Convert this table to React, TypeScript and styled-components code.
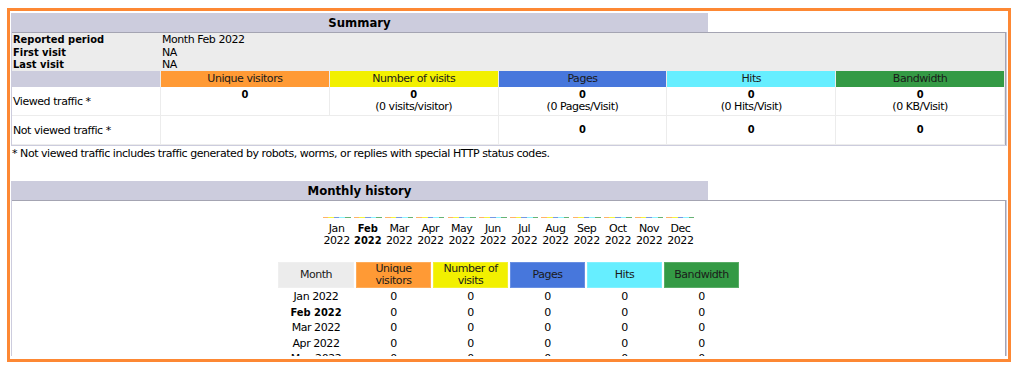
import React from "react";
import styled, { createGlobalStyle } from "styled-components";

const COLORS = {
  u: "#FF9A35",
  v: "#F2F000",
  p: "#4777DC",
  h: "#66EEFF",
  k: "#349A45",
  title: "#CCCCDD",
  gray: "#ECECEC",
  frame: "#FD8834",
  edge: "#A4A4B2",
};

const BOLD_FONT = `"DejaVu Sans Condensed", "DejaVu Sans", Verdana, sans-serif`;

const Global = createGlobalStyle`
  html, body { margin: 0; padding: 0; background: #fff; }
  body { font-family: "DejaVu Sans", Verdana, "Liberation Sans", sans-serif; color: #000; letter-spacing: -0.45px; }
  b { font-family: ${BOLD_FONT}; letter-spacing: 0; }
  #root { width: 1024px; }
`;

const Frame = styled.div`
  margin: 8px 0 0 7px;
  width: 996px;
  border: 3px solid ${COLORS.frame};
  padding: 2px 1px 3px 1px;
  background: #fff;
`;

const Clip = styled.div`
  height: 343px;
  overflow: hidden;
  font-size: 11px;
`;

const TitleRow = styled.div`
  display: flex;
  height: 19px;
`;

const Title = styled.div`
  width: 697px;
  background: ${COLORS.title};
  font-family: ${BOLD_FONT};
  font-weight: bold;
  font-size: 13px;
  letter-spacing: 0;
  display: flex;
  align-items: center;
  justify-content: center;
`;

const Blank = styled.div`
  flex: 1;
  background: #fff;
`;

const Box = styled.div`
  background: ${COLORS.title};
  padding: 0 1px 1px 1px;
`;

const SummaryGrid = styled.div`
  display: grid;
  grid-template-columns: 149px repeat(5, 1fr);
  background: #fff;
  border-top: 1px solid ${COLORS.edge};
  border-right: 1px solid ${COLORS.edge};
`;

const InfoLabel = styled.div<{ $h: number }>`
  grid-column: 1;
  background: ${COLORS.gray};
  font-family: ${BOLD_FONT};
  font-weight: bold;
  letter-spacing: 0;
  height: ${(p) => p.$h}px;
  line-height: ${(p) => p.$h}px;
  padding-left: 1px;
  white-space: nowrap;
`;

const InfoValue = styled.div<{ $h: number }>`
  grid-column: 2 / span 5;
  background: ${COLORS.gray};
  height: ${(p) => p.$h}px;
  line-height: ${(p) => p.$h}px;
  padding-left: 1px;
`;

const HeadBlank = styled.div`
  background: ${COLORS.title};
  height: 16px;
  border-right: 1px solid ${COLORS.gray};
`;

const HeadCell = styled.div<{ $bg: string }>`
  background: ${(p) => p.$bg};
  height: 16px;
  line-height: 16px;
  text-align: center;
  border-right: 1px solid ${COLORS.gray};
  color: #1a1a1a;
  white-space: nowrap;
`;

const RowLabel = styled.div`
  grid-column: 1;
  height: 28px;
  display: flex;
  align-items: center;
  padding-left: 1px;
  border-right: 1px solid ${COLORS.gray};
  border-bottom: 1px solid ${COLORS.gray};
`;

const ValueCell = styled.div<{ $span?: number }>`
  grid-column: span ${(p) => p.$span ?? 1};
  height: 28px;
  display: flex;
  flex-direction: column;
  align-items: center;
  justify-content: center;
  line-height: 12px;
  border-right: 1px solid ${COLORS.gray};
  border-bottom: 1px solid ${COLORS.gray};
`;

const Note = styled.div`
  padding: 1px 0 0 1px;
  line-height: 13px;
  height: 34px;
  white-space: nowrap;
`;

const HistoryBody = styled.div`
  background: #fff;
  border-top: 1px solid ${COLORS.edge};
  border-right: 1px solid ${COLORS.edge};
  height: 200px;
  display: flex;
  flex-direction: column;
  align-items: center;
`;

const Chart = styled.div`
  display: flex;
  padding-top: 16px;
`;

const ChartCol = styled.div`
  width: 31.25px;
  display: flex;
  flex-direction: column;
  align-items: center;
`;

const Bars = styled.div`
  display: flex;
  height: 1px;
`;

const Bar = styled.span<{ $c: string }>`
  width: 5.6px;
  height: 1px;
  background: ${(p) => p.$c};
  opacity: 0.75;
`;

const MonthLabel = styled.div<{ $cur?: boolean }>`
  margin-top: 5px;
  text-align: center;
  line-height: 12px;
  white-space: nowrap;
  ${(p) =>
    p.$cur
      ? `font-family: ${BOLD_FONT}; font-weight: bold; letter-spacing: 0;`
      : ""}
`;

const MonthTable = styled.div`
  margin-top: 15px;
  display: grid;
  grid-template-columns: 76px repeat(5, 75px);
  column-gap: 2px;
  grid-auto-rows: 15.5px;
  grid-template-rows: 27px;
`;

const MHead = styled.div<{ $bg: string }>`
  background: ${(p) => p.$bg};
  height: 26px;
  display: flex;
  align-items: center;
  justify-content: center;
  text-align: center;
  line-height: 12px;
  color: #1a1a1a;
  box-shadow: inset 0 0 0 1px rgba(255, 255, 255, 0.18);
`;

const MCell = styled.div<{ $bold?: boolean }>`
  text-align: center;
  line-height: 15.5px;
  white-space: nowrap;
  ${(p) =>
    p.$bold
      ? `font-family: ${BOLD_FONT}; font-weight: bold; letter-spacing: 0;`
      : ""}
`;

const months = ["Jan", "Feb", "Mar", "Apr", "May", "Jun", "Jul", "Aug", "Sep", "Oct", "Nov", "Dec"];
const barColors = [COLORS.u, COLORS.v, COLORS.p, COLORS.h, COLORS.k];

export default function App() {
  return (
    <>
      <Global />
      <Frame>
        <Clip>
          <TitleRow>
            <Title>Summary</Title>
            <Blank />
          </TitleRow>
          <Box>
            <SummaryGrid>
              <InfoLabel $h={13}>Reported period</InfoLabel>
              <InfoValue $h={13}>Month Feb 2022</InfoValue>
              <InfoLabel $h={13}>First visit</InfoLabel>
              <InfoValue $h={13}>NA</InfoValue>
              <InfoLabel $h={12}>Last visit</InfoLabel>
              <InfoValue $h={12}>NA</InfoValue>

              <HeadBlank />
              <HeadCell $bg={COLORS.u}>Unique visitors</HeadCell>
              <HeadCell $bg={COLORS.v}>Number of visits</HeadCell>
              <HeadCell $bg={COLORS.p}>Pages</HeadCell>
              <HeadCell $bg={COLORS.h}>Hits</HeadCell>
              <HeadCell $bg={COLORS.k}>Bandwidth</HeadCell>

              <RowLabel>Viewed traffic *</RowLabel>
              <ValueCell>
                <b>0</b>
                <span>&nbsp;</span>
              </ValueCell>
              <ValueCell>
                <b>0</b>
                <span>(0 visits/visitor)</span>
              </ValueCell>
              <ValueCell>
                <b>0</b>
                <span>(0 Pages/Visit)</span>
              </ValueCell>
              <ValueCell>
                <b>0</b>
                <span>(0 Hits/Visit)</span>
              </ValueCell>
              <ValueCell>
                <b>0</b>
                <span>(0 KB/Visit)</span>
              </ValueCell>

              <RowLabel>Not viewed traffic *</RowLabel>
              <ValueCell $span={2} />
              <ValueCell>
                <b>0</b>
              </ValueCell>
              <ValueCell>
                <b>0</b>
              </ValueCell>
              <ValueCell>
                <b>0</b>
              </ValueCell>
            </SummaryGrid>
          </Box>
          <Note>
            * Not viewed traffic includes traffic generated by robots, worms, or replies with special HTTP status codes.
          </Note>

          <TitleRow>
            <Title>Monthly history</Title>
            <Blank />
          </TitleRow>
          <Box>
            <HistoryBody>
              <Chart>
                {months.map((m) => (
                  <ChartCol key={m}>
                    <Bars>
                      {barColors.map((c, i) => (
                        <Bar key={i} $c={c} />
                      ))}
                    </Bars>
                    <MonthLabel $cur={m === "Feb"}>
                      {m}
                      <br />
                      2022
                    </MonthLabel>
                  </ChartCol>
                ))}
              </Chart>
              <MonthTable>
                <MHead $bg={COLORS.gray}>Month</MHead>
                <MHead $bg={COLORS.u}>
                  Unique
                  <br />
                  visitors
                </MHead>
                <MHead $bg={COLORS.v}>
                  Number of
                  <br />
                  visits
                </MHead>
                <MHead $bg={COLORS.p}>Pages</MHead>
                <MHead $bg={COLORS.h}>Hits</MHead>
                <MHead $bg={COLORS.k}>Bandwidth</MHead>
                {months.map((m) => (
                  <React.Fragment key={m}>
                    <MCell $bold={m === "Feb"}>{m} 2022</MCell>
                    <MCell>0</MCell>
                    <MCell>0</MCell>
                    <MCell>0</MCell>
                    <MCell>0</MCell>
                    <MCell>0</MCell>
                  </React.Fragment>
                ))}
              </MonthTable>
            </HistoryBody>
          </Box>
        </Clip>
      </Frame>
    </>
  );
}
